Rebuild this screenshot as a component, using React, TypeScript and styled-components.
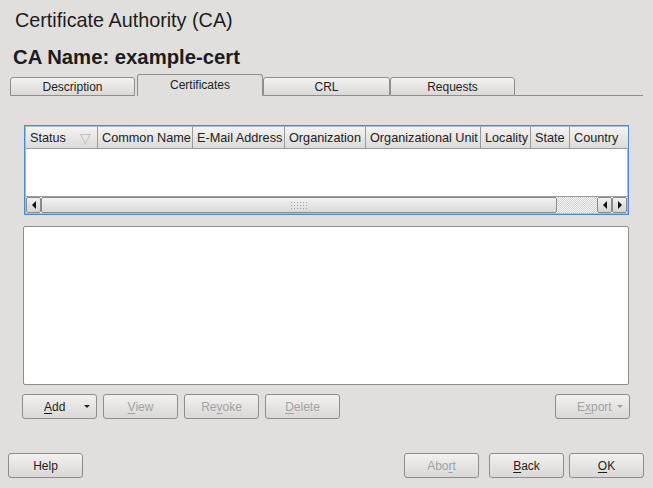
import React from "react";
import styled, { createGlobalStyle } from "styled-components";

const GlobalStyle = createGlobalStyle`
  html, body {
    margin: 0;
    padding: 0;
    background: #e0dfdd;
  }
  body {
    font-family: "Liberation Sans", Arial, sans-serif;
    color: #1c1c1c;
  }
`;

const Window = styled.div`
  width: 653px;
  height: 488px;
  display: flex;
  flex-direction: column;
  background: #e0dfdd;
  overflow: hidden;
`;

const Title = styled.h1`
  margin: 8px 0 0 15px;
  font-size: 19.8px;
  line-height: 24px;
  font-weight: normal;
`;

const CaName = styled.h2`
  margin: 14px 0 0 13px;
  font-size: 20.3px;
  line-height: 22px;
  font-weight: bold;
`;

const TabBar = styled.div`
  display: flex;
  align-items: flex-end;
  height: 23px;
  margin: 5px 10px 0 10px;
`;

const Tab = styled.div<{ $active?: boolean; $w?: number }>`
  width: ${(p) => p.$w ?? 125}px;
  height: ${(p) => (p.$active ? 22 : 19)}px;
  box-sizing: border-box;
  display: flex;
  align-items: center;
  justify-content: center;
  font-size: 12px;
  color: #222;
  border: 1px solid #8e8e8e;
  border-radius: 3px 3px 0 0;
  margin-left: ${(p) => (p.$active ? 2 : 0)}px;
  padding-bottom: ${(p) => (p.$active ? 2 : 0)}px;
  background: ${(p) =>
    p.$active ? "#e0dfdd" : "linear-gradient(#f3f2f1, #dad9d7)"};
  border-bottom: ${(p) => (p.$active ? "none" : "1px solid #8e8e8e")};
`;

const TabFill = styled.div`
  flex: 1;
  border-bottom: 1px solid #8e8e8e;
`;

const Content = styled.div`
  display: flex;
  flex-direction: column;
  padding: 29px 23px 0 23px;
`;

const TableFrame = styled.div`
  margin-left: 1px;
  width: 605px;
  height: 90px;
  box-sizing: border-box;
  border: 1px solid #4c8ad0;
  box-shadow: inset 0 0 0 1px #9cc0e8;
  padding: 1px;
  display: flex;
  flex-direction: column;
  background: #fff;
`;

const HeaderRow = styled.div`
  display: flex;
  height: 22px;
`;

const HeaderCell = styled.div<{ $w: number }>`
  width: ${(p) => p.$w}px;
  flex: none;
  box-sizing: border-box;
  display: flex;
  align-items: center;
  justify-content: space-between;
  padding: 0 3px 0 4px;
  font-size: 12.7px;
  color: #222;
  white-space: nowrap;
  overflow: hidden;
  background: linear-gradient(#f4f3f2, #dcdbd9);
  border-right: 1px solid #9a9a9a;
  border-bottom: 1px solid #9a9a9a;
  &:last-child {
    border-right: none;
  }
`;

const SortMark = styled.span`
  color: #b9b9b9;
  font-size: 14px;
  margin-right: 3px;
`;

const TableBody = styled.div`
  flex: 1;
  background: #fff;
`;

const HScroll = styled.div`
  display: flex;
  height: 16px;
  border-top: 1px solid #9a9a9a;
  background: #fff;
`;

const ArrowBtn = styled.div`
  width: 15px;
  flex: none;
  box-sizing: border-box;
  display: flex;
  align-items: center;
  justify-content: center;
  border: 1px solid #8a8a8a;
  border-radius: 2px;
  background: linear-gradient(#f2f1f0, #d6d5d3);
`;

const Thumb = styled.div`
  width: 516px;
  flex: none;
  box-sizing: border-box;
  display: flex;
  align-items: center;
  justify-content: center;
  border: 1px solid #8a8a8a;
  border-radius: 2px;
  background: linear-gradient(#f3f2f1, #dad9d7);
`;

const Grip = styled.div`
  width: 18px;
  height: 8px;
  background-image: radial-gradient(#a5a5a5 0.8px, transparent 1px);
  background-size: 3px 3px;
`;

const Trough = styled.div`
  flex: 1;
  background: repeating-conic-gradient(#d2d2d2 0 25%, #f6f6f6 0 50%) 0 0 / 2px 2px;
`;

const Details = styled.div`
  margin-top: 11px;
  width: 606px;
  height: 159px;
  box-sizing: border-box;
  border: 1px solid #8d8d8d;
  border-radius: 2px;
  background: #fff;
`;

const ButtonRow = styled.div`
  display: flex;
  gap: 6px;
  margin-top: 9px;
  margin-left: -1px;
`;

const Spacer = styled.div`
  flex: 1;
`;

const Button = styled.button<{ $disabled?: boolean; $menu?: boolean }>`
  width: 75px;
  height: 25px;
  box-sizing: border-box;
  display: flex;
  align-items: center;
  justify-content: ${(p) => (p.$menu ? "space-between" : "center")};
  padding: ${(p) => (p.$menu ? "0 6px 0 21px" : "0")};
  font-family: "Liberation Sans", Arial, sans-serif;
  font-size: 12px;
  color: ${(p) => (p.$disabled ? "#a2a2a2" : "#1e1e1e")};
  border: 1px solid #8d8d8d;
  border-radius: 3px;
  background: linear-gradient(#f2f1f0, #d9d8d6);
  cursor: default;
  u {
    text-decoration-thickness: 1px;
    text-underline-offset: 2px;
  }
`;

const Caret = styled.span<{ $disabled?: boolean }>`
  width: 0;
  height: 0;
  border-left: 3px solid transparent;
  border-right: 3px solid transparent;
  border-top: 3px solid ${(p) => (p.$disabled ? "#a2a2a2" : "#222")};
`;

const Footer = styled.div`
  display: flex;
  gap: 5px;
  margin: 34px 9px 0 8px;
`;

const FooterGap = styled.div`
  flex: 1;
`;

const Arrow = ({ dir }: { dir: "left" | "right" }) => (
  <svg width="6" height="8" viewBox="0 0 6 8">
    {dir === "left" ? (
      <polygon points="5,0 5,8 1,4" fill="#111" />
    ) : (
      <polygon points="1,0 1,8 5,4" fill="#111" />
    )}
  </svg>
);

const columns: [string, number][] = [
  ["Status", 72],
  ["Common Name", 95],
  ["E-Mail Address", 92],
  ["Organization", 81],
  ["Organizational Unit", 115],
  ["Locality", 50],
  ["State", 39],
  ["Country", 58],
];

export default function App() {
  return (
    <Window>
      <GlobalStyle />
      <Title>Certificate Authority (CA)</Title>
      <CaName>CA Name: example-cert</CaName>
      <TabBar>
        <Tab>Description</Tab>
        <Tab $active $w={126}>Certificates</Tab>
        <Tab $w={127}>CRL</Tab>
        <Tab>Requests</Tab>
        <TabFill />
      </TabBar>
      <Content>
        <TableFrame>
          <HeaderRow>
            {columns.map(([name, w]) => (
              <HeaderCell key={name} $w={w}>
                <span>{name}</span>
                {name === "Status" && <SortMark>▽</SortMark>}
              </HeaderCell>
            ))}
          </HeaderRow>
          <TableBody />
          <HScroll>
            <ArrowBtn>
              <Arrow dir="left" />
            </ArrowBtn>
            <Thumb>
              <Grip />
            </Thumb>
            <Trough />
            <ArrowBtn>
              <Arrow dir="left" />
            </ArrowBtn>
            <ArrowBtn>
              <Arrow dir="right" />
            </ArrowBtn>
          </HScroll>
        </TableFrame>
        <Details />
        <ButtonRow>
          <Button $menu>
            <span>
              <u>A</u>dd
            </span>
            <Caret />
          </Button>
          <Button $disabled>
            <span>
              <u>V</u>iew
            </span>
          </Button>
          <Button $disabled>
            <span>
              Re<u>v</u>oke
            </span>
          </Button>
          <Button $disabled>
            <span>
              <u>D</u>elete
            </span>
          </Button>
          <Spacer />
          <Button $disabled $menu>
            <span>
              E<u>x</u>port
            </span>
            <Caret $disabled />
          </Button>
        </ButtonRow>
      </Content>
      <Footer>
        <Button>Help</Button>
        <FooterGap />
        <Button $disabled style={{ marginRight: 5 }}>
          <span>
            Abo<u>r</u>t
          </span>
        </Button>
        <Button>
          <span>
            <u>B</u>ack
          </span>
        </Button>
        <Button>
          <span>
            <u>O</u>K
          </span>
        </Button>
      </Footer>
    </Window>
  );
}
